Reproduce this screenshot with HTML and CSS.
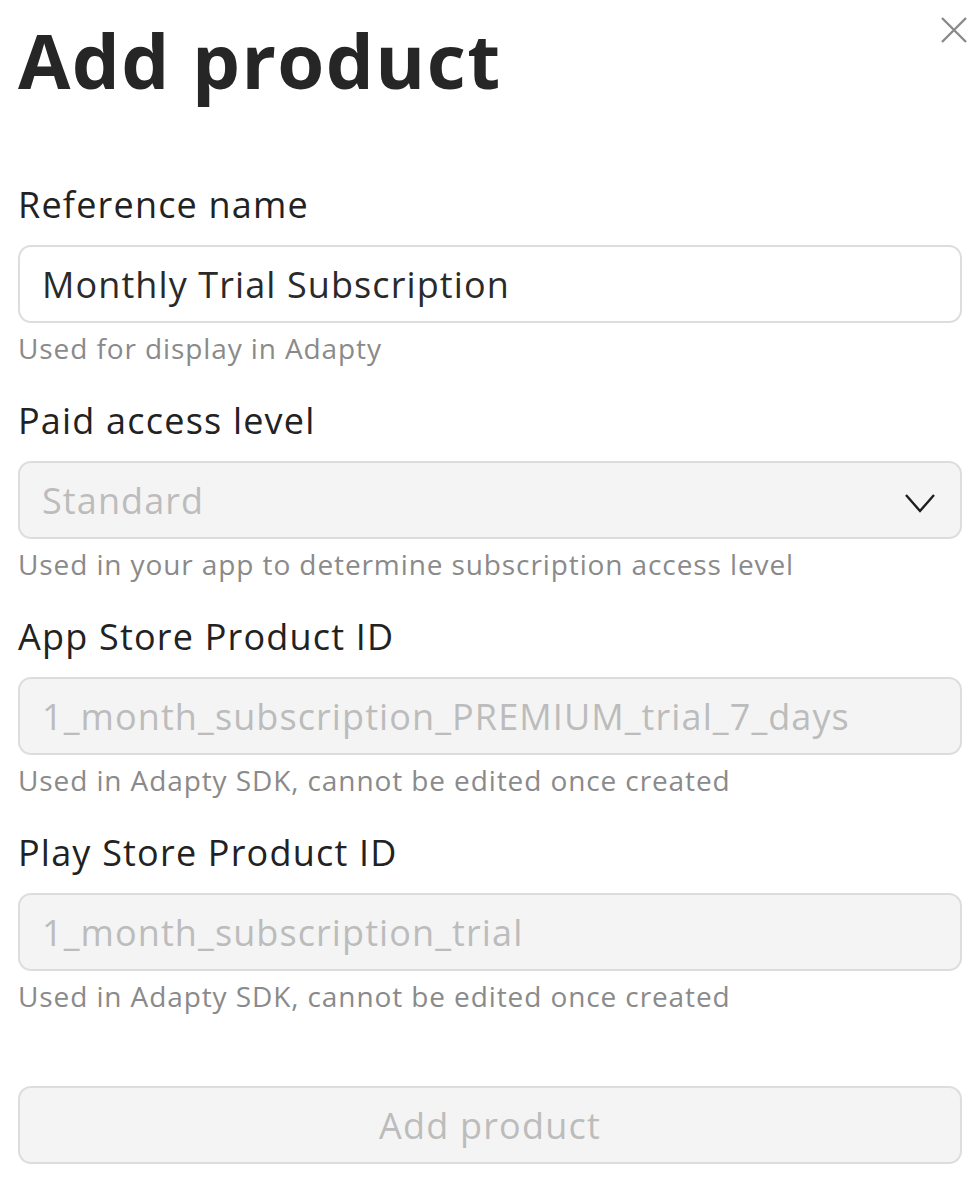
FILE: index.html
```html
<!DOCTYPE html>
<html lang="en">
<head>
<meta charset="utf-8">
<title>Add product</title>
<link rel="stylesheet" href="styles.css">
</head>
<body>
<div class="modal">
  <button class="close" aria-label="Close">
    <svg viewBox="0 0 28 28" width="28" height="28"><path d="M2 2 L26 26 M26 2 L2 26" stroke="#8a8a8a" stroke-width="2.4" fill="none"/></svg>
  </button>
  <h1 class="title">Add product</h1>

  <div class="field">
    <label class="label">Reference name</label>
    <div class="input">Monthly Trial Subscription</div>
    <div class="help">Used for display in Adapty</div>
  </div>

  <div class="field">
    <label class="label">Paid access level</label>
    <div class="input disabled select">
      <span>Standard</span>
      <svg class="chev" viewBox="0 0 32 20" width="32" height="20"><path d="M2 2 L16 18 L30 2" stroke="#1e1e1e" stroke-width="2.4" fill="none"/></svg>
    </div>
    <div class="help">Used in your app to determine subscription access level</div>
  </div>

  <div class="field">
    <label class="label">App Store Product ID</label>
    <div class="input disabled">1_month_subscription_PREMIUM_trial_7_days</div>
    <div class="help">Used in Adapty SDK, cannot be edited once created</div>
  </div>

  <div class="field">
    <label class="label">Play Store Product ID</label>
    <div class="input disabled">1_month_subscription_trial</div>
    <div class="help">Used in Adapty SDK, cannot be edited once created</div>
  </div>

  <button class="submit" disabled>Add product</button>
</div>
</body>
</html>
```

FILE: styles.css
```css
html, body {
  margin: 0;
  padding: 0;
  background: #ffffff;
}

body {
  font-family: "Open Sans", "Liberation Sans", sans-serif;
  color: #222222;
}

.modal {
  position: relative;
  padding: 22px 14px 0 18px;
  display: flex;
  flex-direction: column;
}

.close {
  position: absolute;
  top: 16px;
  right: 8px;
  width: 28px;
  height: 28px;
  padding: 0;
  border: none;
  background: none;
}

.close svg {
  display: block;
}

.title {
  margin: 0 0 85px 0;
  font-size: 76px;
  line-height: 76px;
  font-weight: 700;
  color: #262626;
  letter-spacing: 1.4px;
}

.field {
  display: flex;
  flex-direction: column;
  margin-bottom: 33px;
}

.label {
  font-size: 36px;
  line-height: 44px;
  color: #222222;
  letter-spacing: 1.2px;
  margin-bottom: 18px;
}

.input {
  box-sizing: border-box;
  height: 78px;
  border: 2px solid #dddddd;
  border-radius: 13px;
  padding: 0 20px 0 22px;
  display: flex;
  align-items: center;
  font-size: 36px;
  letter-spacing: 1.1px;
  color: #2a2a2a;
  background: #ffffff;
}

.input.disabled {
  background: #f4f4f4;
  color: #bcbcbc;
}

.select {
  justify-content: space-between;
}

.chev {
  display: block;
  margin-right: 4px;
  margin-top: 6px;
}

.help {
  margin-top: 7px;
  font-size: 28px;
  line-height: 36px;
  letter-spacing: 0.9px;
  color: #8a8a8a;
}

.submit {
  margin-top: 39px;
  box-sizing: border-box;
  height: 78px;
  border: 2px solid #dddddd;
  border-radius: 13px;
  background: #f4f4f4;
  color: #bcbcbc;
  font-family: "Open Sans", "Liberation Sans", sans-serif;
  font-size: 36px;
  letter-spacing: 1.2px;
  width: 100%;
}
```
